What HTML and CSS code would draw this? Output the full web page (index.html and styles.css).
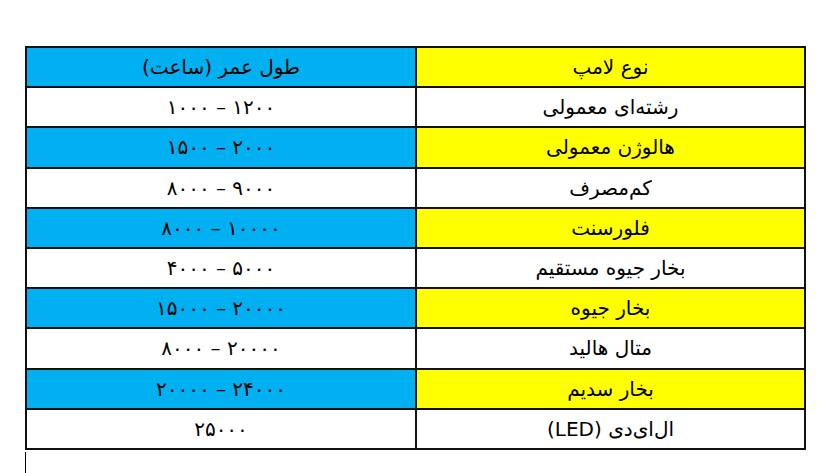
FILE: index.html
```html
<!DOCTYPE html>
<html lang="fa">
<head>
<meta charset="utf-8">
<link rel="stylesheet" href="styles.css">
</head>
<body>
<table class="lamps" dir="rtl">
  <tr class="hl"><td class="name">نوع لامپ</td><td class="life">طول عمر (ساعت)</td></tr>
  <tr><td class="name">رشته‌ای معمولی</td><td class="life">۱۲۰۰ – ۱۰۰۰</td></tr>
  <tr class="hl"><td class="name">هالوژن معمولی</td><td class="life">۲۰۰۰ – ۱۵۰۰</td></tr>
  <tr><td class="name">کم‌مصرف</td><td class="life">۹۰۰۰ – ۸۰۰۰</td></tr>
  <tr class="hl"><td class="name">فلورسنت</td><td class="life">۱۰۰۰۰ – ۸۰۰۰</td></tr>
  <tr><td class="name">بخار جیوه مستقیم</td><td class="life">۵۰۰۰ – ۴۰۰۰</td></tr>
  <tr class="hl"><td class="name">بخار جیوه</td><td class="life">۲۰۰۰۰ – ۱۵۰۰۰</td></tr>
  <tr><td class="name">متال هالید</td><td class="life">۲۰۰۰۰ – ۸۰۰۰</td></tr>
  <tr class="hl"><td class="name">بخار سدیم</td><td class="life">۲۴۰۰۰ – ۲۰۰۰۰</td></tr>
  <tr><td class="name">ال‌ای‌دی (LED)</td><td class="life">۲۵۰۰۰</td></tr>
</table>
<div class="caret"></div>
</body>
</html>
```
FILE: styles.css
```css
html, body {
  margin: 0;
  padding: 0;
  background: #fff;
}
body {
  padding: 46px 0 0 25px;
  font-family: "DejaVu Sans", "Liberation Sans", sans-serif;
  color: #000;
}
.lamps {
  border-collapse: collapse;
  width: 781px;
  table-layout: fixed;
}
.lamps td {
  border: 2px solid #111;
  height: 38.2px;
  padding: 0;
  text-align: center;
  vertical-align: middle;
  font-size: 20px;
  line-height: 24px;
  width: 50%;
}
.lamps td.name {
  width: 387px;
}
.lamps tr.hl td.name {
  background: #ffff00;
}
.lamps tr.hl td.life {
  background: #00b0f0;
}
.caret {
  width: 1px;
  height: 21px;
  margin-top: 2px;
  background: #000;
}
```
